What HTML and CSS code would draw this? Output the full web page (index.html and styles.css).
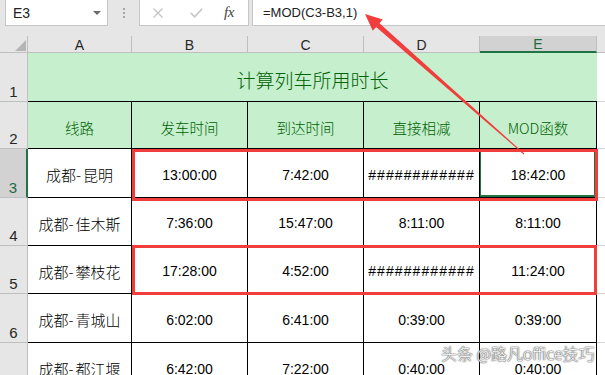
FILE: index.html
```html
<!DOCTYPE html>
<html>
<head>
<meta charset="utf-8">
<link rel="stylesheet" href="styles.css">
</head>
<body>
<div class="app">
  <div class="fbar">
    <div class="namebox"><span class="name">E3</span><span class="drop"></span></div>
    <div class="grip"><i></i><i></i><i></i></div>
    <div class="iconbox">
      <svg class="ic-x" width="10" height="10" viewBox="0 0 10 10"><path d="M0.5 0.5L9.5 9.5M9.5 0.5L0.5 9.5"/></svg>
      <svg class="ic-ok" width="13" height="10" viewBox="0 0 13 10"><path d="M0.8 5L4.6 8.8L12.2 0.8"/></svg>
      <span class="fx">fx</span>
    </div>
    <div class="formula">=MOD(C3-B3,1)</div>
  </div>

  <div class="sheet">
    <div class="corner"><svg width="28" height="17" viewBox="0 0 28 17"><polygon points="15,15 26,4 26,15"/></svg></div>
    <div class="ch">A</div>
    <div class="ch">B</div>
    <div class="ch">C</div>
    <div class="ch">D</div>
    <div class="ch ch-sel">E</div>
    <div class="ch ch-f"></div>

    <div class="rh">1</div>
    <div class="title">计算列车所用时长</div>
    <div class="c f"></div>

    <div class="rh">2</div>
    <div class="c hd">线路</div>
    <div class="c hd">发车时间</div>
    <div class="c hd">到达时间</div>
    <div class="c hd">直接相减</div>
    <div class="c hd">MOD函数</div>
    <div class="c f"></div>

    <div class="rh rh-sel">3</div>
    <div class="c zh">成都-<span class="gap">昆明</span></div>
    <div class="c">13:00:00</div>
    <div class="c">7:42:00</div>
    <div class="c hash">############</div>
    <div class="c cell-sel">18:42:00</div>
    <div class="c f"></div>

    <div class="rh">4</div>
    <div class="c zh">成都-<span class="gap">佳木斯</span></div>
    <div class="c">7:36:00</div>
    <div class="c">15:47:00</div>
    <div class="c">8:11:00</div>
    <div class="c">8:11:00</div>
    <div class="c f"></div>

    <div class="rh">5</div>
    <div class="c zh">成都-<span class="gap">攀枝花</span></div>
    <div class="c">17:28:00</div>
    <div class="c">4:52:00</div>
    <div class="c hash">############</div>
    <div class="c">11:24:00</div>
    <div class="c f"></div>

    <div class="rh">6</div>
    <div class="c zh">成都-<span class="gap">青城山</span></div>
    <div class="c">6:02:00</div>
    <div class="c">6:41:00</div>
    <div class="c">0:39:00</div>
    <div class="c">0:39:00</div>
    <div class="c f"></div>

    <div class="rh">7</div>
    <div class="c zh">成都-<span class="gap">都江堰</span></div>
    <div class="c">6:42:00</div>
    <div class="c">7:22:00</div>
    <div class="c">0:40:00</div>
    <div class="c">0:40:00</div>
    <div class="c f"></div>
  </div>

  <div class="mark mark-r3"></div>
  <div class="mark mark-r5"></div>

  <svg class="arrow" width="605" height="375" viewBox="0 0 605 375">
    <polygon points="365,14 382.7,19.6 379.5,23.3 524.3,153.6 523.7,154.4 376.1,27.1 372.8,30.8"/>
  </svg>

  <div class="wm">头条 @路凡office技巧</div>
</div>
</body>
</html>
```

FILE: styles.css
```css
html, body {
  margin: 0;
  padding: 0;
}
body {
  width: 605px;
  height: 375px;
  overflow: hidden;
  background: #e6e6e6;
  font-family: "Liberation Sans", "Noto Sans CJK SC", sans-serif;
  color: #000;
}
.app {
  position: relative;
  width: 605px;
  height: 375px;
  overflow: hidden;
}

/* formula bar */
.fbar {
  display: flex;
  height: 26px;
  padding-left: 5px;
}
.namebox {
  width: 103px;
  height: 26px;
  box-sizing: border-box;
  background: #fff;
  border: 1px solid #c6c6c6;
  border-top: none;
  display: flex;
  align-items: center;
  padding-left: 7px;
}
.name {
  font-size: 14px;
  color: #222;
}
.drop {
  margin-left: auto;
  margin-right: 6px;
  width: 0;
  height: 0;
  border-left: 4px solid transparent;
  border-right: 4px solid transparent;
  border-top: 4px solid #6a6a6a;
}
.grip {
  width: 31px;
  display: flex;
  flex-direction: column;
  align-items: center;
  justify-content: center;
  gap: 2px;
}
.grip i {
  display: block;
  width: 2px;
  height: 2px;
  background: #a6a6a6;
}
.iconbox {
  width: 110px;
  height: 26px;
  box-sizing: border-box;
  background: #fff;
  border: 1px solid #c6c6c6;
  border-top: none;
  display: flex;
  align-items: center;
  padding-left: 13px;
}
.ic-x {
  stroke: #c4c4c4;
  stroke-width: 1.3;
  fill: none;
}
.ic-ok {
  margin-left: 27px;
  stroke: #c4c4c4;
  stroke-width: 1.6;
  fill: none;
}
.fx {
  margin-left: 21px;
  font-family: "Liberation Serif", serif;
  font-style: italic;
  font-size: 15px;
  color: #444;
  letter-spacing: -0.5px;
}
.formula {
  flex: 1;
  margin-left: 3px;
  height: 26px;
  box-sizing: border-box;
  background: #fff;
  border: 1px solid #c6c6c6;
  border-top: none;
  border-right: none;
  padding-left: 10px;
  display: flex;
  align-items: center;
  font-size: 13px;
  color: #222;
}

/* sheet grid */
.sheet {
  margin-top: 10px;
  display: grid;
  grid-template-columns: 28px 104px 116px 116px 116px 117px 1fr;
  grid-template-rows: 17px 49px 47px 49px 48px 48px 49px 49px;
}
.corner {
  background: #e6e6e6;
  border-right: 1px solid #bfbfbf;
  border-bottom: 1px solid #bfbfbf;
  box-sizing: border-box;
}
.corner svg {
  display: block;
  fill: #b5b5b5;
}
.ch {
  background: #e6e6e6;
  border-right: 1px solid #bfbfbf;
  border-bottom: 1px solid #bfbfbf;
  box-sizing: border-box;
  display: flex;
  align-items: center;
  justify-content: center;
  font-size: 14px;
  color: #262626;
  padding-top: 1px;
}
.ch-sel {
  background: #d2d2d2;
  color: #1e6b40;
  border-bottom: 2px solid #217346;
}
.ch-f {
  border-right: none;
}
.rh {
  background: #e6e6e6;
  border-right: 1px solid #bfbfbf;
  border-bottom: 1px solid #bfbfbf;
  box-sizing: border-box;
  display: flex;
  align-items: flex-end;
  justify-content: center;
  padding-bottom: 1px;
  font-size: 15px;
  line-height: 17px;
  color: #262626;
}
.rh-sel {
  background: #d2d2d2;
  color: #1e6b40;
  border-right: 2px solid #217346;
}
.title {
  grid-column: 2 / 7;
  background: #c6efce;
  color: #006100;
  border-bottom: 1px solid #000;
  box-sizing: border-box;
  display: flex;
  align-items: center;
  justify-content: center;
  padding-top: 4px;
  font-family: "Noto Sans CJK SC", sans-serif;
  font-weight: 300;
  font-size: 19px;
}
.c {
  border-right: 1px solid #000;
  border-bottom: 1px solid #000;
  box-sizing: border-box;
  background: #fff;
  display: flex;
  align-items: center;
  justify-content: center;
  padding-top: 3px;
  font-size: 14px;
  white-space: nowrap;
  overflow: hidden;
}
.hd {
  background: #c6efce;
  color: #006100;
  font-family: "Noto Sans CJK SC", sans-serif;
  font-weight: 300;
  font-size: 14.5px;
  padding-top: 5px;
}
.zh {
  font-family: "Noto Sans CJK SC", sans-serif;
  font-weight: 300;
  font-size: 15px;
}
.gap {
  margin-left: 2px;
}
.hash {
  letter-spacing: 1.1px;
}
.f {
  border-right: none;
  border-bottom: 1px solid #d4d4d4;
}
.cell-sel {
  position: relative;
}
.cell-sel::after {
  content: "";
  position: absolute;
  left: -1px;
  top: -1px;
  right: 0;
  bottom: 0;
  border: 2px solid #217346;
}

/* overlays */
.mark {
  position: absolute;
  box-sizing: border-box;
  border: 3px solid #f23d3d;
}
.mark-r3 {
  left: 132px;
  top: 149px;
  width: 466px;
  height: 52px;
}
.mark-r5 {
  left: 132px;
  top: 245px;
  width: 465px;
  height: 50px;
}
.arrow {
  position: absolute;
  left: 0;
  top: 0;
  fill: #f23d3d;
}
.wm {
  position: absolute;
  left: 441px;
  top: 342px;
  font-family: "Noto Sans CJK SC", sans-serif;
  font-weight: 300;
  font-size: 16px;
  line-height: 22px;
  color: #fff;
  text-shadow: 0 0 1px #555, 0 0 1px #555, 0 0 2px #777;
  white-space: nowrap;
}
```
